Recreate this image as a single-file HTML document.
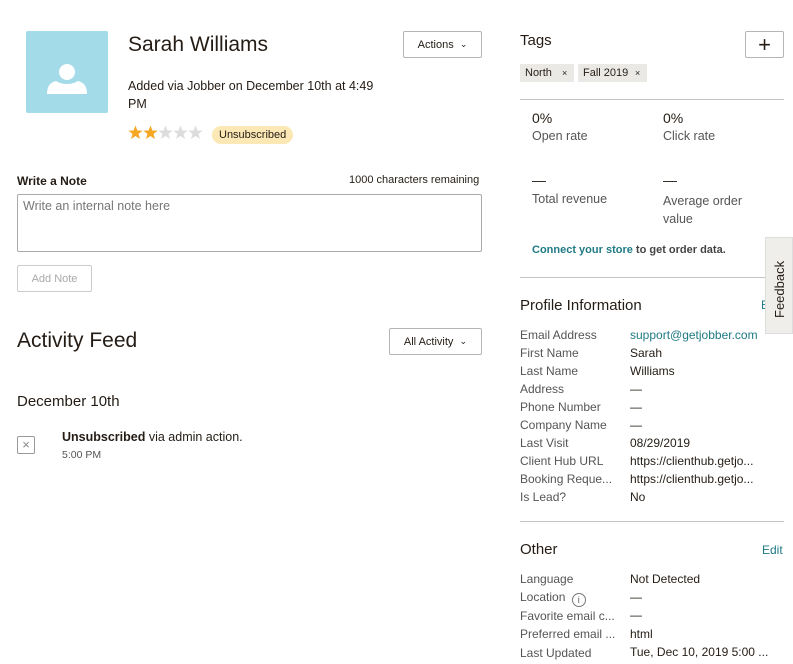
<!DOCTYPE html>
<html><head><meta charset="utf-8"><style>
*{margin:0;padding:0;box-sizing:border-box}
body{width:793px;height:664px;overflow:hidden;background:#fff;font-family:"Liberation Sans",sans-serif;color:#241c15;position:relative}
.a{position:absolute;white-space:nowrap}
.btn{position:absolute;border:1px solid #b5b5b5;background:#fff;border-radius:2px;font-size:11px;color:#241c15;display:flex;align-items:center;justify-content:center}
.lbl{color:#555;font-size:12px}
.hr{position:absolute;height:1px;background:#c4c4c4}
.teal{color:#1f7a84}
</style></head><body>
<div class="a" style="left:26px;top:31px;width:82px;height:82px;background:#a4dbe8;border-radius:2px">
<svg width="82" height="82"><circle cx="41" cy="41" r="8" fill="#fff"/><path d="M21 63 Q21 52 30 50 Q35 53 41 53 Q47 53 52 50 Q61 52 61 63 Z" fill="#fff"/></svg></div>
<div class="a" style="left:128px;top:33px;font-size:21px">Sarah Williams</div>
<div class="a" style="left:128px;top:77px;font-size:12.5px;line-height:18px">Added via Jobber on December 10th at 4:49<br>PM</div>
<svg class="a" style="left:128px;top:125px" width="76" height="16">
<defs><path id="s" d="M7.5 0.5 L9.4 5.5 L14.7 5.6 L10.5 8.9 L12 14 L7.5 11 L3 14 L4.5 8.9 L0.3 5.6 L5.6 5.5 Z"/></defs>
<use href="#s" x="0" fill="#f5a623"/><use href="#s" x="15" fill="#f5a623"/><use href="#s" x="30" fill="#ddd"/><use href="#s" x="45" fill="#ddd"/><use href="#s" x="60" fill="#ddd"/></svg>
<div class="a" style="left:212px;top:126px;height:18px;padding:0 7px;background:#fbe8b5;border-radius:9px;font-size:11px;line-height:18px">Unsubscribed</div>
<div class="btn" style="left:403px;top:31px;width:79px;height:27px">Actions&nbsp;&nbsp;<span style="font-size:9px">⌄</span></div>
<div class="a" style="left:17px;top:174px;font-size:12px;font-weight:bold">Write a Note</div>
<div class="a" style="left:349px;top:174px;font-size:11px">1000 characters remaining</div>
<div class="a" style="left:17px;top:194px;width:465px;height:58px;border:1px solid #aaa;border-radius:2px;padding:4px 5px;font-size:12.5px;color:#777">Write an internal note here</div>
<div class="btn" style="left:17px;top:265px;width:75px;height:27px;color:#aaa;border-color:#ccc">Add Note</div>
<div class="a" style="left:17px;top:329px;font-size:21px">Activity Feed</div>
<div class="btn" style="left:389px;top:328px;width:93px;height:27px">All Activity&nbsp;&nbsp;<span style="font-size:9px">⌄</span></div>
<div class="a" style="left:17px;top:393px;font-size:15px">December 10th</div>
<div class="a" style="left:17px;top:436px;width:18px;height:18px;border:1px solid #999;border-radius:2px;color:#888;font-size:13px;line-height:15px;text-align:center">×</div>
<div class="a" style="left:62px;top:430px;font-size:12.5px"><b>Unsubscribed</b> via admin action.</div>
<div class="a" style="left:62px;top:449px;font-size:10.5px;color:#555">5:00 PM</div>

<div class="a" style="left:520px;top:32px;font-size:15px">Tags</div>
<div class="btn" style="left:745px;top:31px;width:39px;height:27px;font-size:22px;font-weight:300">+</div>
<div class="a" style="left:520px;top:64px;height:18px;width:54px;background:#ebe9e6;font-size:11px;line-height:18px;padding-left:5px">North<span style="position:absolute;left:42px;font-size:9px">×</span></div>
<div class="a" style="left:578px;top:64px;height:18px;width:69px;background:#ebe9e6;font-size:11px;line-height:18px;padding-left:5px">Fall 2019<span style="position:absolute;left:57px;font-size:9px">×</span></div>
<div class="hr" style="left:520px;top:99px;width:264px"></div>
<div class="a" style="left:532px;top:110px;font-size:14px">0%</div>
<div class="a lbl" style="left:532px;top:129px;font-size:12.5px">Open rate</div>
<div class="a" style="left:663px;top:110px;font-size:14px">0%</div>
<div class="a lbl" style="left:663px;top:129px;font-size:12.5px">Click rate</div>
<div class="a" style="left:532px;top:172px;font-size:14px">—</div>
<div class="a lbl" style="left:532px;top:192px;font-size:12.5px">Total revenue</div>
<div class="a" style="left:663px;top:172px;font-size:14px">—</div>
<div class="a lbl" style="left:663px;top:192px;font-size:12.5px;line-height:18px;white-space:normal">Average order<br>value</div>
<div class="a" style="left:532px;top:244px;font-size:11px;font-weight:bold;color:#444"><span class="teal">Connect your store</span> to get order data.</div>
<div class="hr" style="left:520px;top:277px;width:264px"></div>
<div class="a" style="left:520px;top:297px;font-size:15px">Profile Information</div>
<div class="a teal" style="left:761px;top:298px;font-size:12px">E</div>
<div class="a" style="left:520px;top:326px;line-height:18px;font-size:12px;color:#555">Email Address<br>First Name<br>Last Name<br>Address<br>Phone Number<br>Company Name<br>Last Visit<br>Client Hub URL<br>Booking Reque...<br>Is Lead?</div>
<div class="a" style="left:630px;top:326px;line-height:18px;font-size:12px;width:138px;overflow:hidden"><span class="teal">support@getjobber.com</span><br>Sarah<br>Williams<br>—<br>—<br>—<br>08/29/2019<br>https://clienthub.getjo...<br>https://clienthub.getjo...<br>No</div>
<div class="hr" style="left:520px;top:521px;width:264px"></div>
<div class="a" style="left:520px;top:541px;font-size:15px">Other</div>
<div class="a teal" style="left:762px;top:543px;font-size:12px">Edit</div>
<div class="a" style="left:520px;top:570px;line-height:18.2px;font-size:12px;color:#555">Language<br>Location <span style="display:inline-block;width:14px;height:14px;border:1px solid #777;border-radius:50%;font-size:9px;text-align:center;line-height:12px;vertical-align:-2px;margin-left:3px">i</span><br>Favorite email c...<br>Preferred email ...<br>Last Updated</div>
<div class="a" style="left:630px;top:570px;line-height:18.2px;font-size:12px">Not Detected<br>—<br>—<br>html<br>Tue, Dec 10, 2019 5:00 ...</div>
<div class="a" style="left:765px;top:237px;width:28px;height:97px;background:#efeeea;border:1px solid #ddd"><div style="position:absolute;left:6px;top:80px;transform:rotate(-90deg);transform-origin:0 0;font-size:13px;white-space:nowrap">Feedback</div></div>
</body></html>
